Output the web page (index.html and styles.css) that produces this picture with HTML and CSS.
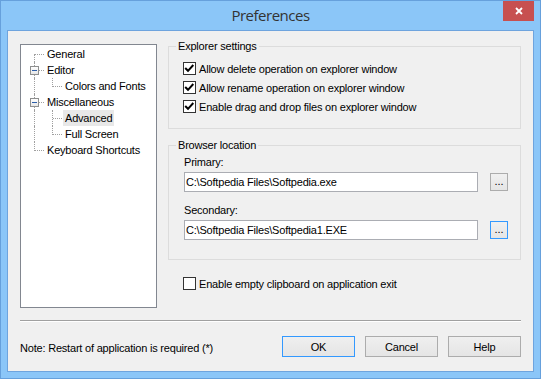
FILE: index.html
```html
<!DOCTYPE html>
<html lang="en">
<head>
    <meta charset="UTF-8">
    <title>Preferences</title>
    <link rel="stylesheet" href="styles.css">
</head>
<body>
    <div class="window">
        <div class="titlebar">
            <span></span>
            <div class="title">Preferences</div>
            <button class="close"><svg width="8" height="8" viewBox="0 0 8 8"><path d="M1 1L7 7M7 1L1 7" stroke="#fff" stroke-width="1.8" fill="none"/></svg></button>
        </div>

        <div class="client">
            <div class="main">
                <div class="tree">
                    <div class="row"><span class="cell first"></span><span class="label">General</span></div>
                    <div class="row"><span class="cell"><span class="toggle"></span></span><span class="label">Editor</span></div>
                    <div class="row"><span class="cell pipe"></span><span class="cell last"></span><span class="label">Colors and Fonts</span></div>
                    <div class="row"><span class="cell"><span class="toggle"></span></span><span class="label">Miscellaneous</span></div>
                    <div class="row"><span class="cell pipe"></span><span class="cell"></span><span class="label selected">Advanced</span></div>
                    <div class="row"><span class="cell pipe"></span><span class="cell last"></span><span class="label">Full Screen</span></div>
                    <div class="row"><span class="cell last"></span><span class="label">Keyboard Shortcuts</span></div>
                </div>

                <div class="settings">
                    <fieldset class="group explorer">
                        <legend>Explorer settings</legend>
                        <label class="check"><span class="box"><svg width="11" height="11" viewBox="0 0 11 11"><path d="M1.2 5L4 7.8L9.3 2" stroke="#000" stroke-width="2" fill="none"/></svg></span>Allow delete operation on explorer window</label>
                        <label class="check"><span class="box"><svg width="11" height="11" viewBox="0 0 11 11"><path d="M1.2 5L4 7.8L9.3 2" stroke="#000" stroke-width="2" fill="none"/></svg></span>Allow rename operation on explorer window</label>
                        <label class="check"><span class="box"><svg width="11" height="11" viewBox="0 0 11 11"><path d="M1.2 5L4 7.8L9.3 2" stroke="#000" stroke-width="2" fill="none"/></svg></span>Enable drag and drop files on explorer window</label>
                    </fieldset>

                    <fieldset class="group browser">
                        <legend>Browser location</legend>
                        <div class="field-label">Primary:</div>
                        <div class="path-row">
                            <input class="path" type="text" value="C:\Softpedia Files\Softpedia.exe">
                            <button class="browse">...</button>
                        </div>
                        <div class="field-label second">Secondary:</div>
                        <div class="path-row">
                            <input class="path" type="text" value="C:\Softpedia Files\Softpedia1.EXE">
                            <button class="browse focused">...</button>
                        </div>
                    </fieldset>

                    <label class="check clipboard"><span class="box"></span>Enable empty clipboard on application exit</label>
                </div>
            </div>

            <div class="separator"></div>

            <div class="footer">
                <span class="note">Note: Restart of application is required (*)</span>
                <button class="btn default">OK</button>
                <button class="btn">Cancel</button>
                <button class="btn">Help</button>
            </div>
        </div>
    </div>
</body>
</html>
```

FILE: styles.css
```css
html, body {
    margin: 0;
}
body {
    font-family: "Liberation Sans", Arial, sans-serif;
    font-size: 11px;
    letter-spacing: -0.2px;
    color: #000;
    background: #8bc6f8;
}
.window {
    width: 541px;
    height: 379px;
    box-sizing: border-box;
    border: 1px solid #66a0dc;
    background: #8bc6f8;
    padding: 0 6px 6px 6px;
    display: flex;
    flex-direction: column;
}
.titlebar {
    height: 29px;
    flex: none;
    display: grid;
    grid-template-columns: 1fr auto 1fr;
    align-items: start;
}
.title {
    font-family: "Open Sans", sans-serif;
    font-size: 15px;
    line-height: 20px;
    letter-spacing: -0.5px;
    padding-top: 4px;
    color: #333;
}
.close {
    justify-self: end;
    width: 31px;
    height: 20px;
    border: 0;
    padding: 0;
    background: #c75050;
    display: flex;
    align-items: center;
    justify-content: center;
}
.client {
    flex: 1;
    background: #f0f0f0;
    border: 1px solid #6ea4de;
    padding: 13px 12px 0 12px;
    display: flex;
    flex-direction: column;
}
.main {
    display: grid;
    grid-template-columns: 137px 353px;
    column-gap: 11px;
    height: 264px;
}

/* tree */
.tree {
    background: #fff;
    border: 1px solid #828790;
    padding: 1px 0 0 6px;
}
.row {
    display: flex;
    height: 16px;
    line-height: 16px;
}
.cell {
    width: 18px;
    height: 16px;
    flex: none;
    position: relative;
}
.cell::before {
    content: "";
    position: absolute;
    left: 7px;
    top: 0;
    bottom: 0;
    border-left: 1px dotted #a0a0a0;
}
.cell::after {
    content: "";
    position: absolute;
    left: 8px;
    right: 1px;
    top: 8px;
    border-top: 1px dotted #a0a0a0;
}
.cell.first::before {
    top: 8px;
}
.cell.last::before {
    bottom: 7px;
}
.cell.pipe::after {
    display: none;
}
.toggle {
    position: absolute;
    left: 3px;
    top: 4px;
    width: 9px;
    height: 9px;
    box-sizing: border-box;
    border: 1px solid #8e8f8f;
    background: linear-gradient(#fff, #e6e6e6);
    z-index: 1;
}
.toggle::before {
    content: "";
    position: absolute;
    left: 1px;
    top: 3px;
    width: 5px;
    height: 1px;
    background: #2c5ea8;
}
.label {
    padding: 0 2px;
    white-space: nowrap;
}
.label.selected {
    background: #e8e8e8;
}

/* settings */
.settings {
    margin-top: -4px;
    display: flex;
    flex-direction: column;
}
.group {
    margin: 0;
    min-width: 0;
    border: 1px solid #dcdcdc;
    padding: 0 12px 0 7px;
}
.group legend {
    padding: 0 2px;
    line-height: 13px;
}
.explorer {
    padding-top: 6px;
    padding-bottom: 12px;
}
.check {
    display: flex;
    align-items: center;
    gap: 3px;
    height: 19px;
    white-space: nowrap;
}
.explorer .check {
    margin-left: 7px;
}
.box {
    width: 13px;
    height: 13px;
    box-sizing: border-box;
    border: 1px solid #333;
    background: #fff;
    flex: none;
    display: flex;
    align-items: center;
    justify-content: center;
}
.browser {
    margin-top: 10px;
    padding-top: 4px;
    padding-bottom: 19px;
}
.field-label {
    line-height: 13px;
    margin-left: 8px;
}
.field-label.second {
    margin-top: 12px;
}
.path-row {
    display: flex;
    align-items: center;
    gap: 12px;
    margin: 3px 0 0 8px;
}
.path {
    flex: 1;
    min-width: 0;
    height: 20px;
    box-sizing: border-box;
    margin: 0;
    border: 1px solid #abadb3;
    background: #fff;
    padding: 0 1px;
    font: inherit;
    letter-spacing: inherit;
    color: #000;
    outline: none;
}
.browse {
    width: 18px;
    height: 18px;
    padding: 0 0 3px 0;
    flex: none;
    border: 1px solid #acacac;
    background: linear-gradient(#f0f0f0, #e5e5e5);
    font: inherit;
    letter-spacing: 0;
    color: #000;
}
.browse.focused {
    border-color: #3399ff;
}
.clipboard {
    margin: 14px 0 0 15px;
}

/* footer */
.separator {
    margin-top: 12px;
    border-top: 1px solid #a0a0a0;
    border-bottom: 1px solid #fff;
}
.footer {
    margin-top: 14px;
    display: flex;
    align-items: center;
    gap: 10px;
}
.note {
    margin-right: auto;
    padding-top: 3px;
}
.btn {
    width: 73px;
    height: 21px;
    padding: 0;
    border: 1px solid #acacac;
    background: linear-gradient(#efefef, #e5e5e5);
    font: inherit;
    letter-spacing: inherit;
    color: #000;
}
.btn.default {
    border-color: #3399ff;
}
```
